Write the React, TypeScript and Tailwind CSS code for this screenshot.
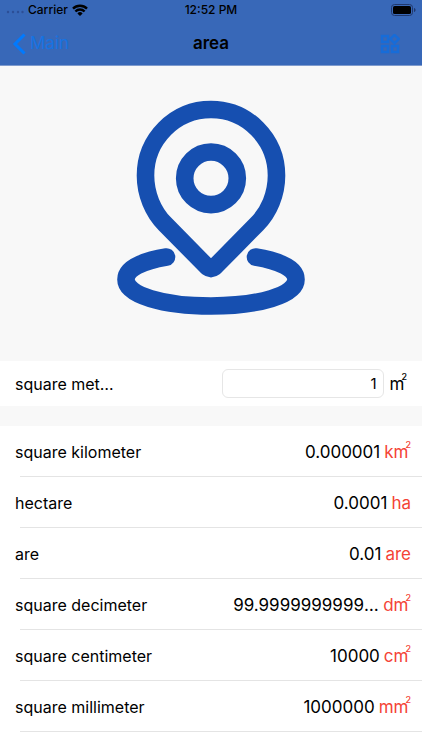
const units = [
    { name: 'square kilometer', value: '0.000001', unit: 'km', squared: true },
    { name: 'hectare', value: '0.0001', unit: 'ha', squared: false },
    { name: 'are', value: '0.01', unit: 'are', squared: false },
    { name: 'square decimeter', value: '99.99999999999999', unit: 'dm', squared: true },
    { name: 'square centimeter', value: '10000', unit: 'cm', squared: true },
    { name: 'square millimeter', value: '1000000', unit: 'mm', squared: true },
]

function Unit({ unit, squared }: { unit: string; squared: boolean }) {
    return (
        <span className="flex shrink-0 items-start">
            {unit}
            {squared && <sup className="top-0 -ml-[3px] text-[9px] leading-none font-medium">2</sup>}
        </span>
    )
}

function StatusBar() {
    return (
        <div className="grid h-5 grid-cols-3 items-center px-1.5 text-xs font-medium">
            <div className="flex items-center gap-1">
                <svg width="18" height="12" viewBox="0 0 18 12" fill="#2d4f96" aria-hidden="true">
                    <circle cx="2" cy="8" r="1.2" />
                    <circle cx="7" cy="8" r="1.2" />
                    <circle cx="12" cy="8" r="1.2" />
                    <circle cx="16.5" cy="8" r="1.2" />
                </svg>
                <span>Carrier</span>
                <svg width="16" height="12" viewBox="0 0 16 12" fill="none" stroke="#000" strokeWidth="2.4" aria-hidden="true">
                    <path d="M1 4.6a10 10 0 0 1 14 0" />
                    <path d="M3.4 7.5a6.4 6.4 0 0 1 9.2 0" />
                    <path d="M8 12 5.4 9.4a3.7 3.7 0 0 1 5.2 0Z" fill="#000" stroke="none" />
                </svg>
            </div>
            <span className="text-center">12:52 PM</span>
            <svg className="justify-self-end" width="25" height="12" viewBox="0 0 25 12" aria-hidden="true">
                <rect x="0.5" y="0.5" width="21" height="11" rx="3" fill="none" stroke="#20386c" />
                <rect x="2" y="2" width="18" height="8" rx="1.6" fill="#000" />
                <path d="M23 4v4c1-.4 1.6-1.2 1.6-2S24 4.4 23 4Z" fill="#20386c" />
            </svg>
        </div>
    )
}

function NavBar() {
    return (
        <nav className="grid h-[46px] grid-cols-3 items-center border-b border-[#7f9bcd] px-3 pt-0.5">
            <a href="#main" className="flex items-center gap-1 text-[17px] text-[#1673e2]">
                <svg width="14" height="22" viewBox="0 0 14 22" fill="none" stroke="#007aff" strokeWidth="3" aria-hidden="true">
                    <path d="M12.5 1.5 3 11l9.500 9.500" />
                </svg>
                Main
            </a>
            <h1 className="text-center text-[17px] font-semibold">area</h1>
            <button type="button" aria-label="Categories" className="mr-2.5 justify-self-end">
                <svg width="20" height="20" viewBox="0 0 20 20" fill="none" stroke="#176cd8" strokeWidth="2.4" aria-hidden="true">
                    <rect x="2" y="2" width="6" height="6" />
                    <rect x="2" y="12" width="6" height="6" />
                    <rect x="12" y="12" width="6" height="6" />
                    <path d="m14.5 .8 4.200 4.200-4.200 4.200L10.300 5Z" />
                </svg>
            </button>
        </nav>
    )
}

export default function App() {
    return (
        <div className="min-h-screen bg-white font-['Inter','Liberation_Sans',sans-serif] text-black">
            <header className="bg-[#3868b8]">
                <StatusBar />
                <NavBar />
            </header>

            <main>
                <div className="flex h-[295px] justify-center bg-[#f8f8f8] pt-[30px]">
                    <svg width="200" height="224" viewBox="111 96 200 224" fill="none" stroke="#164fb0" strokeWidth="17.6" strokeLinecap="round" strokeLinejoin="round" aria-hidden="true">
                        <path d="M207.5 267.2 165 224C153 212 145.5 194 145.5 175.5a65.5 66 0 0 1 131 0C276.5 194 269 212 257 224L214.5 267.2Q211 270 207.5 267.2Z" />
                        <circle cx="211" cy="178.3" r="26.3" />
                        <path d="M166.500 257C142 261 126 269 126 279.500C126 295 163 306 211 306S296 295 296 279.500C296 269 280 261 255.500 257" />
                    </svg>
                </div>

                <div className="flex h-[45px] items-center px-[15px] text-[17px] leading-6">
                    <label htmlFor="amount" className="w-[99px] truncate text-base">square meter</label>
                    <input
                        id="amount"
                        type="text"
                        inputMode="decimal"
                        defaultValue="1"
                        className="mr-1.5 ml-auto h-[29px] w-[162px] rounded-md border border-[#e6e6e6] px-1.5 text-right text-[15px]"
                    />
                    <Unit unit="m" squared />
                </div>

                <div className="h-5 bg-[#f8f8f8]" />

                <ul>
                    {units.map((item) => (
                        <li key={item.name}>
                            <div className="flex h-[50px] items-center justify-between gap-4 pt-0.5 pr-[11px] pl-[15px]">
                                <span className="shrink-0 text-base">{item.name}</span>
                                <span className="flex min-w-0 gap-1 text-[17px] leading-6">
                                    <span className="max-w-[146px] truncate">{item.value}</span>
                                    <span className="flex text-[#f44336]">
                                        <Unit unit={item.unit} squared={item.squared} />
                                    </span>
                                </span>
                            </div>
                            <div className="ml-5 h-px bg-[#e4e4e4]" />
                        </li>
                    ))}
                </ul>
            </main>
        </div>
    )
}
